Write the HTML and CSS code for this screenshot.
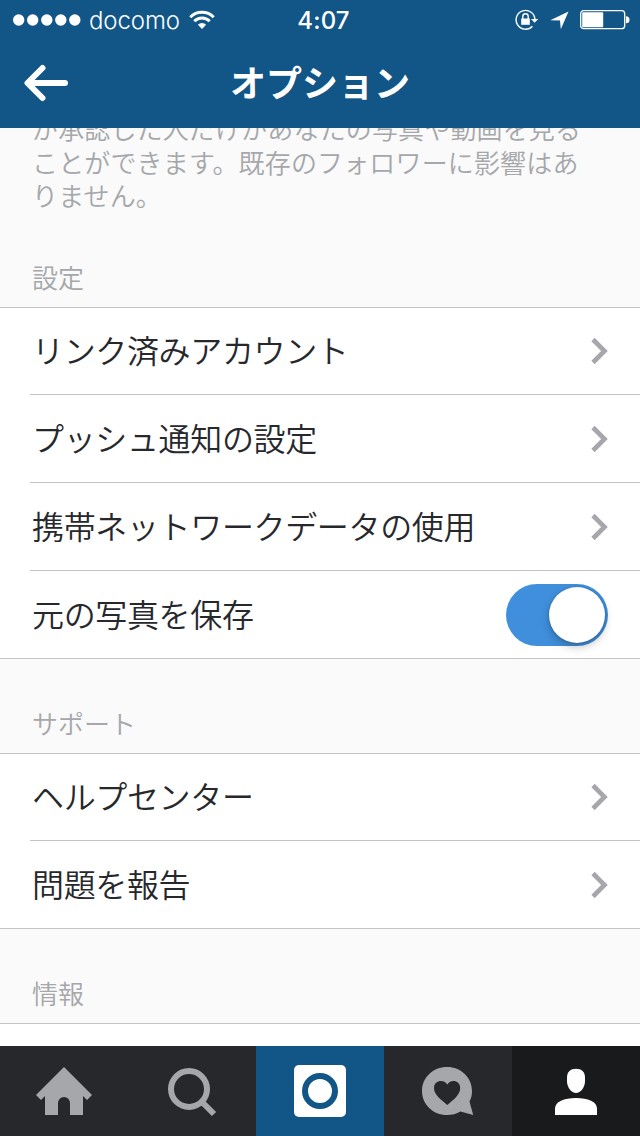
FILE: index.html
```
<!DOCTYPE html>
<html lang="ja">
<head>
<meta charset="utf-8">
<title>オプション</title>
<link rel="stylesheet" href="styles.css">
</head>
<body>
<div class="screen">
  <header class="header">
    <div class="status">
      <div class="status-left">
        <svg class="signal" width="68" height="12" viewBox="0 0 68 12" fill="#fff"><circle cx="5.7" cy="6" r="5.7"/><circle cx="19.7" cy="6" r="5.7"/><circle cx="33.8" cy="6" r="5.7"/><circle cx="47.8" cy="6" r="5.7"/><circle cx="61.8" cy="6" r="5.7"/></svg>
        <span class="carrier">docomo</span>
        <svg class="wifi" width="26" height="20" viewBox="0 0 26 20" fill="none" stroke="#fff" stroke-width="3"><path d="M1.3 7.2A16.5 16.5 0 0 1 24.7 7.2"/><path d="M5.3 11.2A10.9 10.9 0 0 1 20.7 11.2"/><path d="M13 18.9L8.9 14.8A5.8 5.8 0 0 1 17.1 14.8Z" fill="#fff" stroke="none"/></svg>
      </div>
      <span class="clock">4:07</span>
      <div class="status-right">
        <svg width="24" height="22" viewBox="0 0 24 22" fill="none" stroke="#fff" stroke-width="1.4"><path d="M17.4 17.2A9.4 9.4 0 1 1 19.9 10.2"/><path d="M16 10h7.2l-3.6 3.8z" fill="#fff" stroke="none"/><path d="M6.2 9.500h8.600v6.300H6.200z" fill="#fff" stroke="none"/><path d="M7.8 10V7.500a2.700 2.700 0 0 1 5.400 0V10"/></svg>
        <svg class="location" width="19" height="19" viewBox="0 0 19 19" fill="#fff"><path d="M18.500 .5L10.800 18.300L10 9.500L.3 9.200Z"/></svg>
        <svg class="battery" width="50" height="20" viewBox="0 0 50 20"><rect x=".7" y=".7" width="44" height="18" rx="3" fill="none" stroke="#fff" stroke-width="1.3"/><rect x="2.2" y="2.2" width="21" height="15" rx="1" fill="#fff"/><path d="M46 6.200a3.500 3.500 0 0 1 0 7z" fill="#fff"/></svg>
      </div>
    </div>
    <div class="navbar">
      <svg class="back" width="44" height="38" viewBox="0 0 44 38" fill="none" stroke="#fff" stroke-width="6" stroke-linecap="round" stroke-linejoin="round"><path d="M18.500 4L3.500 19l15 15M4 19h37"/></svg>
      <h1 class="title">オプション</h1>
    </div>
  </header>

  <main class="content">
    <p class="note">が承認した人だけがあなたの写真や動画を見る<br>ことができます。既存のフォロワーに影響はあ<br>りません。</p>

    <h2 class="heading">設定</h2>
    <div class="group">
      <div class="row"><span>リンク済みアカウント</span><svg class="chevron" width="17" height="28" viewBox="0 0 17 28"><path d="M2 2.5L13.5 14L2 25.5"/></svg></div>
      <div class="row"><span>プッシュ通知の設定</span><svg class="chevron" width="17" height="28" viewBox="0 0 17 28"><path d="M2 2.5L13.5 14L2 25.5"/></svg></div>
      <div class="row"><span>携帯ネットワークデータの使用</span><svg class="chevron" width="17" height="28" viewBox="0 0 17 28"><path d="M2 2.5L13.5 14L2 25.5"/></svg></div>
      <div class="row"><span>元の写真を保存</span><div class="switch"><div class="knob"></div></div></div>
    </div>

    <h2 class="heading">サポート</h2>
    <div class="group">
      <div class="row"><span>ヘルプセンター</span><svg class="chevron" width="17" height="28" viewBox="0 0 17 28"><path d="M2 2.5L13.5 14L2 25.5"/></svg></div>
      <div class="row"><span>問題を報告</span><svg class="chevron" width="17" height="28" viewBox="0 0 17 28"><path d="M2 2.5L13.5 14L2 25.5"/></svg></div>
    </div>

    <h2 class="heading">情報</h2>
    <div class="group"><div class="row"></div></div>
  </main>

  <nav class="tabs">
    <div class="tab"><svg width="128" height="90" viewBox="0 0 128 90" fill="#a5a7aa"><path d="M64 21L92 49L87 54L83 50V69H70V57a6 6 0 0 0-12 0V69H45V50L41 54L36 49Z"/></svg></div>
    <div class="tab"><svg width="128" height="90" viewBox="0 0 128 90" fill="none" stroke="#a5a7aa"><circle cx="61" cy="43" r="18" stroke-width="6"/><path d="M73.5 55.5L86 68" stroke-width="6"/></svg></div>
    <div class="tab camera"><svg width="128" height="90" viewBox="0 0 128 90"><rect x="38" y="19" width="52" height="52" rx="5" fill="#fff"/><circle cx="64" cy="45" r="15" fill="none" stroke="#125688" stroke-width="6"/></svg></div>
    <div class="tab"><svg width="128" height="90" viewBox="0 0 128 90"><path d="M63 21C77 21 88 31.500 88 45C88 49 87.300 52 85.500 55.500L89.200 69L76.500 65.500C72.500 68 68 69 63 69C49 69 38 58.500 38 45C38 31.500 49 21 63 21Z" fill="#a5a7aa"/><path d="M63.300 59C58 54 50 49.500 50 42C50 34.500 59.500 32.500 63.300 38.500C67 32.500 76.200 34.500 76.200 42C76.200 49.500 68.600 54 63.300 59Z" fill="#27282c"/></svg></div>
    <div class="tab profile"><svg width="128" height="90" viewBox="0 0 128 90" fill="#fff"><path d="M64 22.700C69.500 22.700 73 26 73 31.500V35C73 41.500 68.500 47 64 47S55 41.500 55 35V31.500C55 26 58.500 22.700 64 22.700Z"/><path d="M43 69V62.500C43 56 52 52 64 52s21 4 21 10.500V69Z"/></svg></div>
  </nav>
</div>
</body>
</html>
```

FILE: styles.css
```
* { box-sizing: border-box; }

body {
  margin: 0;
  font-family: "Noto Sans CJK JP", sans-serif;
  font-weight: 350;
}

.screen {
  width: 640px;
  height: 1136px;
  display: flex;
  flex-direction: column;
  overflow: hidden;
  background: #fafafa;
}

svg { display: block; flex: none; }

/* Header */
.header {
  height: 128px;
  flex: none;
  background: #125688;
  color: #fff;
}

.status {
  height: 40px;
  padding: 0 10px 0 13px;
  display: grid;
  grid-template-columns: 1fr auto 1fr;
  align-items: center;
  font-family: Inter, sans-serif;
  font-size: 24px;
  line-height: 40px;
}

.status-left,
.status-right {
  display: flex;
  align-items: center;
}

.status-right { justify-content: flex-end; }

.carrier {
  margin-left: 8px;
  padding-top: 2px;
  line-height: 38px;
  letter-spacing: -0.1px;
}

.wifi { margin-left: 9px; }

.clock {
  padding: 2px 0 0 4px;
  font-weight: 500;
  line-height: 38px;
  letter-spacing: 0.2px;
}

.location { margin-left: 11px; }
.battery { margin-left: 11px; }

.navbar {
  height: 86px;
  padding: 0 24px;
  display: grid;
  grid-template-columns: 44px 1fr 44px;
  align-items: center;
}

.title {
  margin: 0;
  padding-bottom: 4px;
  font-size: 36px;
  font-weight: 700;
  line-height: 76px;
  text-align: center;
}

/* Scrolled settings list */
.content {
  flex: 1;
  min-height: 0;
  overflow: hidden;
}

.note {
  margin: -17px 0 0;
  height: 102px;
  padding-left: 32px;
  color: #a5a7aa;
  font-size: 26px;
  line-height: 33.5px;
  letter-spacing: 0.15px;
  white-space: nowrap;
}

.heading {
  margin: 0;
  height: 94px;
  padding: 48px 32px 0;
  color: #a5a7aa;
  font-size: 26px;
  font-weight: 350;
  line-height: 32px;
}

.group {
  border-top: 1px solid #c3c4c6;
  background: #fff;
}

.row {
  height: 88px;
  margin-left: 30px;
  padding: 0 32px 0 2px;
  display: flex;
  align-items: center;
  justify-content: space-between;
  border-bottom: 1px solid #c3c4c6;
  color: #27282c;
  font-size: 32px;
  line-height: 48px;
  letter-spacing: -0.35px;
}

.row > span { padding-bottom: 4px; }

.row:first-child { height: 87px; }

.row:last-child {
  margin-left: 0;
  padding-left: 32px;
}

.chevron {
  fill: none;
  stroke: #a5a7aa;
  stroke-width: 4.6;
}

.switch {
  width: 102px;
  height: 62px;
  padding: 3px;
  display: flex;
  justify-content: flex-end;
  border-radius: 31px;
  background: #3f8fdc;
}

.knob {
  width: 56px;
  height: 56px;
  border-radius: 50%;
  background: #fff;
  box-shadow: 0 4px 8px rgba(0, 0, 0, 0.25), 0 0 2px rgba(0, 0, 0, 0.25);
}

/* Tab bar */
.tabs {
  height: 90px;
  flex: none;
  display: grid;
  grid-template-columns: repeat(5, 1fr);
  background: #27282c;
}

.camera { background: #125688; }
.profile { background: #191a1c; }
```
